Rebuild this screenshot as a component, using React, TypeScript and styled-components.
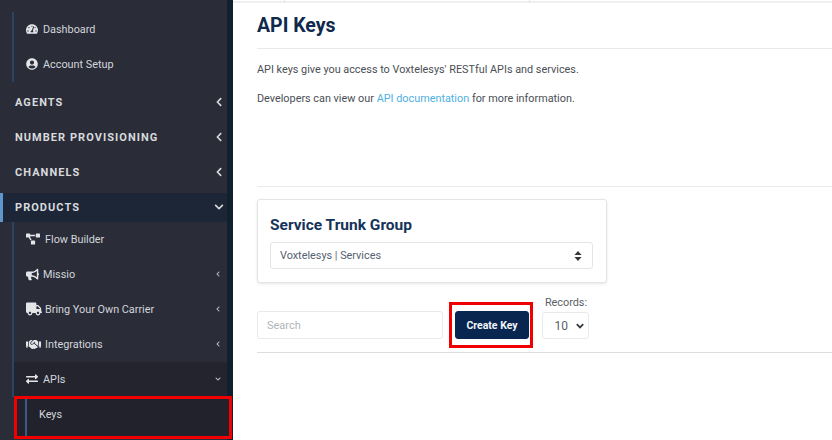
import { ReactNode } from 'react';
import styled, { createGlobalStyle } from 'styled-components';
import {
	FaBullhorn,
	FaChevronDown,
	FaChevronLeft,
	FaExchangeAlt,
	FaHandshake,
	FaProjectDiagram,
	FaTachometerAlt,
	FaTruck,
	FaUserCircle,
} from 'react-icons/fa';

const GlobalStyle = createGlobalStyle`
	html, body {
		margin: 0;
		height: 440px;
		overflow: hidden;
		background: #fff;
		font-family: Roboto, "Liberation Sans", sans-serif;
	}
	* {
		box-sizing: border-box;
	}
`;

const chevronUpDown = `url("data:image/svg+xml,%3Csvg xmlns='http://www.w3.org/2000/svg' width='8' height='10' viewBox='0 0 8 10'%3E%3Cpath fill='%23343a40' d='M4 0 7.6 4H.4zM4 10 .4 6h7.2z'/%3E%3C/svg%3E")`;
const chevronDown = `url("data:image/svg+xml,%3Csvg xmlns='http://www.w3.org/2000/svg' width='8' height='6' viewBox='0 0 8 6'%3E%3Cpath fill='none' stroke='%23343a40' stroke-width='1.8' d='M.8 1.2 4 4.4l3.2-3.2'/%3E%3C/svg%3E")`;

type NavItemProps = {
	icon: ReactNode;
	label: string;
	size?: number;
	gap?: number;
	more?: boolean;
	open?: boolean;
};

function NavItem({ icon, label, size, gap, more, open }: NavItemProps) {
	return (
		<SubRow $open={open}>
			<IconBox $size={size ?? 12}>{icon}</IconBox>
			<SubLabel $gap={gap ?? 5}>{label}</SubLabel>
			{more && <SmallCaret>{open ? <FaChevronDown /> : <FaChevronLeft />}</SmallCaret>}
		</SubRow>
	);
}

function Section({ label, open }: { label: string; open?: boolean }) {
	return (
		<SectionRow $open={open}>
			<span>{label}</span>
			<Caret>{open ? <FaChevronDown /> : <FaChevronLeft />}</Caret>
		</SectionRow>
	);
}

export default function App() {
	return (
		<Page>
			<GlobalStyle />
			<Sidebar>
				<TopGroup>
					<NavItem icon={<FaTachometerAlt />} label="Dashboard" />
					<NavItem icon={<FaUserCircle />} label="Account Setup" />
				</TopGroup>
				<Sections>
					<Section label="AGENTS" />
					<Section label="NUMBER PROVISIONING" />
					<Section label="CHANNELS" />
					<Section label="PRODUCTS" open />
				</Sections>
				<SubGroup>
					<NavItem icon={<FaProjectDiagram />} label="Flow Builder" size={14} gap={5} />
					<NavItem icon={<FaBullhorn />} label="Missio" size={13} gap={4} more />
					<NavItem icon={<FaTruck />} label="Bring Your Own Carrier" size={16} gap={3} more />
					<NavItem icon={<FaHandshake />} label="Integrations" size={15} gap={4} more />
					<NavItem icon={<FaExchangeAlt />} label="APIs" more open />
				</SubGroup>
				<KeysBox>
					<KeysLink>Keys</KeysLink>
				</KeysBox>
			</Sidebar>
			<Rail />
			<Main>
				<TopStrip>
					<Tab $width={52} />
					<Tab $width={245} />
				</TopStrip>
				<Content>
					<Title>API Keys</Title>
					<Intro>
						<p>API keys give you access to Voxtelesys' RESTful APIs and services.</p>
						<p>
							Developers can view our <a href="#docs">API documentation</a> for more information.
						</p>
					</Intro>
					<Card>
						<CardTitle>Service Trunk Group</CardTitle>
						<TrunkSelect defaultValue="services">
							<option value="services">Voxtelesys | Services</option>
						</TrunkSelect>
					</Card>
					<Toolbar>
						<Search placeholder="Search" />
						<Highlight>
							<CreateButton>Create Key</CreateButton>
						</Highlight>
						<Records>
							<span>Records:</span>
							<RecordsSelect defaultValue="10">
								<option value="10">10</option>
							</RecordsSelect>
						</Records>
					</Toolbar>
				</Content>
			</Main>
		</Page>
	);
}

const Page = styled.div`
	display: flex;
	width: 832px;
	height: 440px;
	overflow: hidden;
`;

const Sidebar = styled.nav`
	width: 227px;
	height: 440px;
	flex: none;
	padding-top: 12px;
	background: #2a2c37;
	color: #d3d6dc;
`;

const Rail = styled.div`
	width: 6px;
	height: 440px;
	flex: none;
	background: #10202f;
`;

const TopGroup = styled.div`
	width: 213px;
	margin-left: 12px;
	border-left: 2px solid #2c4464;
`;

const Sections = styled.div`
	display: flex;
	flex-direction: column;
	gap: 6px;
	margin-top: 6px;
`;

const SectionRow = styled.div<{ $open?: boolean }>`
	display: flex;
	align-items: center;
	justify-content: space-between;
	height: 29px;
	padding: 0 3px 1px ${({ $open }) => ($open ? '12px' : '15px')};
	border-left: ${({ $open }) => ($open ? '3px solid #5f97cd' : '0')};
	background: ${({ $open }) => ($open ? '#1c2636' : 'transparent')};
	font-size: 11px;
	font-weight: 700;
	letter-spacing: 1.05px;
	color: #d8dade;
`;

const Caret = styled.span`
	display: flex;
	font-size: 10px;
	color: #d8dade;
`;

const SubGroup = styled.div`
	width: 215px;
	margin-left: 12px;
	border-left: 2px solid #2c4464;
`;

const SubRow = styled.div<{ $open?: boolean }>`
	display: flex;
	align-items: center;
	height: 35px;
	padding: 0 6px 1px 12px;
	background: ${({ $open }) => ($open ? '#23242e' : 'transparent')};
	font-size: 10.85px;
`;

const IconBox = styled.span<{ $size: number }>`
	display: flex;
	flex: none;
	font-size: ${({ $size }) => $size}px;
	color: #e3e5e9;
`;

const SubLabel = styled.span<{ $gap: number }>`
	margin-left: ${({ $gap }) => $gap}px;
	flex: 1;
`;

const SmallCaret = styled.span`
	display: flex;
	font-size: 6px;
	color: #b9bcc4;
`;

const KeysBox = styled.div`
	position: relative;
	z-index: 1;
	width: 218px;
	height: 43px;
	margin: -1px 0 0 14px;
	padding-left: 8px;
	border: 3px solid #f00000;
	background: #21222c;
`;

const KeysLink = styled.div`
	display: flex;
	align-items: center;
	height: 100%;
	padding: 0 0 6px 12px;
	border-left: 2px solid #3c5c88;
	font-size: 10.85px;
	color: #d3d6dc;
`;

const Main = styled.main`
	flex: 1;
	min-width: 0;
	background: #fff;
`;

const TopStrip = styled.div`
	display: flex;
	height: 3px;
	border-bottom: 2px solid #efefef;
`;

const Tab = styled.div<{ $width: number }>`
	width: ${({ $width }) => $width}px;
	height: 3px;
	border-right: 1px solid #e6e6e6;
`;

const Content = styled.div`
	padding-left: 24px;
`;

const Title = styled.h1`
	height: 46px;
	margin: 0;
	padding-top: 11px;
	border-bottom: 1px solid #e8e9ea;
	font-size: 19.5px;
	line-height: 24px;
	font-weight: 700;
	color: #0f2a4d;
`;

const Intro = styled.div`
	height: 138px;
	padding-top: 13px;
	border-bottom: 1px solid #e8e9ea;
	font-size: 10.85px;
	line-height: 15px;
	color: #4a4f55;

	p {
		margin: 0 0 14px;
	}

	a {
		color: #4fb0e0;
		text-decoration: none;
	}
`;

const Card = styled.section`
	width: 350px;
	height: 84px;
	margin-top: 12px;
	padding: 15px 13px 0 12px;
	border: 1px solid #e3e4e6;
	border-radius: 3px;
	box-shadow: 0 1px 3px rgba(0, 0, 0, 0.1);
`;

const CardTitle = styled.h2`
	margin: 0 0 7px;
	font-size: 15.5px;
	line-height: 20px;
	font-weight: 700;
	color: #15335a;
`;

const TrunkSelect = styled.select`
	display: block;
	width: 100%;
	height: 27px;
	padding: 0 9px;
	border: 1px solid #e4e5e7;
	border-radius: 3px;
	appearance: none;
	background: #fff ${chevronUpDown} no-repeat right 10px center;
	font: 10.85px Roboto, "Liberation Sans", sans-serif;
	color: #556070;
`;

const Toolbar = styled.div`
	display: flex;
	align-items: flex-end;
	height: 70px;
	padding-bottom: 4px;
	border-bottom: 1px solid #dcdddf;
`;

const Search = styled.input`
	width: 186px;
	height: 28px;
	margin-bottom: 9px;
	padding: 0 9px;
	border: 1px solid #e8e9ea;
	border-radius: 3px;
	font: 11px Roboto, "Liberation Sans", sans-serif;
	outline: none;

	&::placeholder {
		color: #b0b5ba;
	}
`;

const Highlight = styled.div`
	width: 84px;
	height: 46px;
	margin: 0 8px 0 6px;
	padding: 6px 1px 0 3px;
	border: 3px solid #f00000;
`;

const CreateButton = styled.button`
	display: block;
	width: 100%;
	height: 28px;
	margin: 0;
	padding: 0;
	border: 1px solid #082650;
	border-radius: 3px;
	background: #082650;
	font: 700 10.5px Roboto, "Liberation Sans", sans-serif;
	color: #f3f5f8;
`;

const Records = styled.div`
	display: flex;
	flex-direction: column;
	align-items: center;
	width: 48px;
	margin-bottom: 9px;
	font-size: 10.85px;
	color: #5a5f66;

	span {
		line-height: 14px;
		margin: 0 0 2px 2px;
	}
`;

const RecordsSelect = styled.select`
	width: 47px;
	height: 27px;
	padding: 0 0 0 12px;
	border: 1px solid #e8e9ea;
	border-radius: 3px;
	appearance: none;
	background: #fff ${chevronDown} no-repeat right 4px center;
	font: 12px Roboto, "Liberation Sans", sans-serif;
	color: #5a5f66;
`;
